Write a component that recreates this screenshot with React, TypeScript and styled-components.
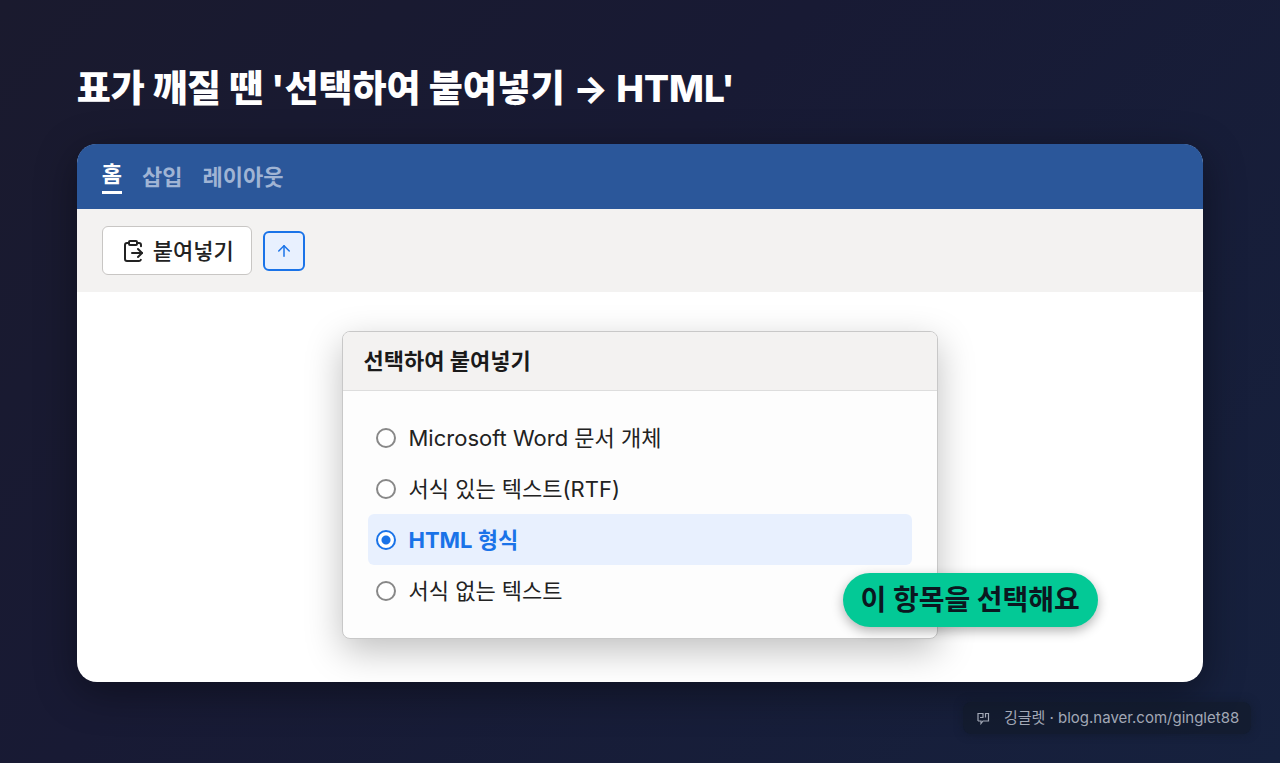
import React, { useState } from "react";
import styled, { createGlobalStyle } from "styled-components";
import { ArrowUp, ClipboardPaste } from "lucide-react";

const GlobalStyle = createGlobalStyle`
  * { box-sizing: border-box; }
  body {
    margin: 0;
    font-family: Inter, "Noto Sans CJK KR", sans-serif;
    color: #222222;
  }
  button, input { font: inherit; color: inherit; }
`;

const Page = styled.main`
  display: flex;
  flex-direction: column;
  min-height: 100vh;
  padding: 61px 6% 0;
  background: linear-gradient(135deg, #1a1a2e 0%, #181a34 40%, #16213e 100%);
`;

const Title = styled.h1`
  margin: 0 0 27px;
  font-size: 37px;
  line-height: 56px;
  font-weight: 800;
  color: #ffffff;
`;

const Window = styled.section`
  border-radius: 20px;
  background: #ffffff;
  box-shadow: 0 10px 40px rgba(0, 0, 0, 0.4);
`;

const TabBar = styled.nav`
  display: flex;
  align-items: center;
  gap: 20px;
  height: 65px;
  padding: 0 25px;
  border-radius: 19px 19px 0 0;
  background: #2b579a;
`;

const Tab = styled.a<{ $active?: boolean }>`
  font-size: 22px;
  line-height: 30px;
  font-weight: 700;
  text-decoration: none;
  color: ${(p) => (p.$active ? "#ffffff" : "#a0b4d4")};
  padding-bottom: ${(p) => (p.$active ? "2px" : "0")};
  border-bottom: ${(p) => (p.$active ? "3px solid #ffffff" : "0")};
`;

const Toolbar = styled.div`
  display: flex;
  align-items: center;
  gap: 11px;
  height: 83px;
  padding: 0 25px;
  background: #f3f2f1;
`;

const PasteButton = styled.button`
  display: flex;
  align-items: center;
  gap: 8px;
  height: 49px;
  padding: 0 17px 0 18px;
  border: 1px solid #c8c6c4;
  border-radius: 6px;
  background: #ffffff;
  font-size: 22px;
  line-height: 30px;
  font-weight: 500;
`;

const MoreButton = styled.button`
  display: flex;
  align-items: center;
  justify-content: center;
  width: 42px;
  height: 40px;
  padding: 0;
  border: 2px solid #1a73e8;
  border-radius: 6px;
  background: #e8f0fe;
  color: #1a73e8;
`;

const Canvas = styled.div`
  display: flex;
  justify-content: center;
  padding: 39px 0 43px;
`;

const Dialog = styled.form`
  position: relative;
  width: 53%;
  min-width: 480px;
  border: 1px solid #c8c8c8;
  border-radius: 8px;
  background: #fdfdfd;
  box-shadow: 0 12px 36px rgba(0, 0, 0, 0.25);
`;

const DialogTitle = styled.h2`
  margin: 0;
  padding: 13px 21px;
  border-bottom: 1px solid #dddddd;
  border-radius: 7px 7px 0 0;
  background: #f3f2f1;
  font-size: 22px;
  line-height: 32px;
  font-weight: 700;
  color: #1a1a1a;
`;

const Options = styled.fieldset`
  margin: 0;
  padding: 21px 25px 22px;
  border: 0;
`;

const Option = styled.label<{ $active: boolean }>`
  display: flex;
  align-items: center;
  gap: 13px;
  height: 51px;
  padding: 0 8px;
  border-radius: 6px;
  font-size: 22px;
  line-height: 30px;
  font-weight: ${(p) => (p.$active ? 700 : 400)};
  color: ${(p) => (p.$active ? "#1a73e8" : "#222222")};
  background: ${(p) => (p.$active ? "#e8f0fe" : "transparent")};
`;

const Radio = styled.input`
  appearance: none;
  width: 20px;
  height: 20px;
  margin: 0;
  border: 2px solid #888888;
  border-radius: 50%;
  background: #ffffff;

  &:checked {
    border-color: #1a73e8;
    background: radial-gradient(circle, #1a73e8 4px, #ffffff 5px);
  }
`;

const Callout = styled.div`
  position: absolute;
  left: 500px;
  bottom: 11px;
  padding: 7px 18px;
  border-radius: 27px;
  background: #03c996;
  box-shadow: 0 4px 12px rgba(0, 0, 0, 0.3);
  font-size: 28px;
  line-height: 40px;
  font-weight: 700;
  white-space: nowrap;
  color: #0b1720;
`;

const Credit = styled.footer`
  display: flex;
  align-items: center;
  align-self: flex-end;
  gap: 13px;
  margin: 20px -48px 20px 0;
  padding: 4px 12px;
  border-radius: 8px;
  background: rgba(15, 23, 36, 0.5);
  box-shadow: 0 0 8px rgba(15, 23, 36, 0.5);
  font-size: 15px;
  line-height: 24px;
  color: #a2a8b6;
`;

const Logo = () => (
  <svg width="16" height="14" viewBox="0 0 16 14" fill="none" stroke="currentColor" strokeWidth="1.2" aria-hidden="true">
    <path d="M3 10V2.500h5v4H5M8 4v2.500M10.500 6.500v-4h3V10H8l-2 2.500V10H3" />
  </svg>
);

const tabs = ["홈", "삽입", "레이아웃"];
const formats = ["Microsoft Word 문서 개체", "서식 있는 텍스트(RTF)", "HTML 형식", "서식 없는 텍스트"];

export default function App() {
  const [format, setFormat] = useState("HTML 형식");
  return (
    <>
      <GlobalStyle />
      <Page lang="ko">
        <Title>표가 깨질 땐 '선택하여 붙여넣기 → HTML'</Title>
        <Window>
          <TabBar>
            {tabs.map((tab, i) => (
              <Tab key={tab} href="#" $active={i === 0}>{tab}</Tab>
            ))}
          </TabBar>
          <Toolbar>
            <PasteButton type="button">
              <ClipboardPaste size={24} />
              붙여넣기
            </PasteButton>
            <MoreButton type="button" aria-label="붙여넣기 옵션">
              <ArrowUp size={18} strokeWidth={2} />
            </MoreButton>
          </Toolbar>
          <Canvas>
            <Dialog>
              <DialogTitle>선택하여 붙여넣기</DialogTitle>
              <Options aria-label="붙여넣기 형식">
                {formats.map((name) => (
                  <Option key={name} $active={name === format}>
                    <Radio type="radio" name="format" checked={name === format} onChange={() => setFormat(name)} />
                    {name}
                  </Option>
                ))}
              </Options>
              <Callout>이 항목을 선택해요</Callout>
            </Dialog>
          </Canvas>
        </Window>
        <Credit>
          <Logo />
          <span>깅글렛 · blog.naver.com/ginglet88</span>
        </Credit>
      </Page>
    </>
  );
}
